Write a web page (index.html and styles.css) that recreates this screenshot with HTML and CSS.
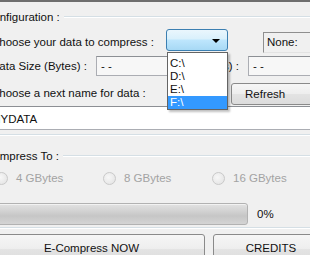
FILE: index.html
```html
<!DOCTYPE html>
<html lang="en">
<head>
  <meta charset="UTF-8">
  <title>E-Compress</title>
  <link rel="stylesheet" href="styles.css">
</head>
<body>
  <div class="window">
    <!-- Configuration group -->
    <div class="group-title">
      <span>Configuration :</span>
      <span class="group-line"></span>
    </div>

    <div class="row row-drive">
      <span class="label label-drive">Choose your data to compress :</span>
      <div class="combo">
        <div class="combo-box"><span class="combo-arrow"></span></div>
        <div class="combo-list">
          <div class="combo-item">C:\</div>
          <div class="combo-item">D:\</div>
          <div class="combo-item">E:\</div>
          <div class="combo-item selected">F:\</div>
        </div>
      </div>
      <div class="none-box">None:</div>
    </div>

    <div class="row row-size">
      <span class="label label-size">Data Size (Bytes) :</span>
      <div class="textbox readonly size-box">- -</div>
      <span class="label label-free">(Bytes) :</span>
      <div class="textbox readonly free-box">- -</div>
    </div>

    <div class="row row-name">
      <span class="label label-name">Choose a next name for data :</span>
      <div class="btn refresh">Refresh</div>
    </div>

    <div class="textbox name-box">MYDATA</div>
    <div class="group-bottom"></div>

    <!-- Compress To group -->
    <div class="group-title title-compress">
      <span>Compress To :</span>
      <span class="group-line"></span>
    </div>

    <div class="radios">
      <div class="radio"><span class="radio-dot"></span>4 GBytes</div>
      <div class="radio"><span class="radio-dot"></span>8 GBytes</div>
      <div class="radio"><span class="radio-dot"></span>16 GBytes</div>
    </div>

    <div class="row row-progress">
      <div class="progress"></div>
      <span class="percent">0%</span>
    </div>
    <div class="group-bottom bottom-compress"></div>

    <div class="row row-actions">
      <div class="btn compress-now">E-Compress NOW</div>
      <div class="btn credits">CREDITS</div>
    </div>
  </div>
</body>
</html>
```

FILE: styles.css
```css
body {
  margin: 0;
  background-color: #f0f0f0;
  overflow: hidden;
  font-family: "Liberation Sans", Arial, sans-serif;
  font-size: 11.5px;
  color: #111;
}

.window {
  margin-left: -15px;
  width: 360px;
  border-top: 2px solid #6e6e6e;
}

/* group boxes */
.group-title {
  display: flex;
  align-items: center;
  height: 14px;
  line-height: 14px;
  margin-top: 8px;
  white-space: nowrap;
}

.group-line {
  flex: 1;
  margin-left: 4px;
  border-top: 1px solid #d5dfe5;
  border-bottom: 1px solid #fff;
}

.group-bottom {
  margin-top: 4px;
  border-top: 1px solid #d5dfe5;
  border-bottom: 1px solid #fff;
}

.title-compress {
  margin-top: 13px;
}

.bottom-compress {
  margin-top: 2px;
}

/* rows */
.row {
  display: flex;
  align-items: flex-start;
  white-space: nowrap;
}

.label {
  flex-shrink: 0;
}

.row-drive {
  margin-top: 5px;
  padding-left: 6px;
}

.label-drive {
  width: 175px;
  margin-top: 2px;
  line-height: 22px;
}

.combo {
  position: relative;
  width: 62px;
  flex-shrink: 0;
}

.combo-box {
  height: 20px;
  border: 1px solid #3c7fb1;
  border-radius: 3px;
  background: linear-gradient(#eaf6fd, #d9f0fc 45%, #bee6fd 50%, #a7d9f5);
  position: relative;
}

.combo-arrow {
  position: absolute;
  right: 7px;
  top: 9px;
  border-left: 4px solid transparent;
  border-right: 4px solid transparent;
  border-top: 4px solid #000;
}

.combo-list {
  position: absolute;
  z-index: 2;
  top: 23px;
  left: 1px;
  width: 59px;
  padding-top: 4px;
  background-color: #fff;
  border: 1px solid #646464;
  box-shadow: 2px 2px 2px rgba(0,0,0,0.25);
}

.combo-item {
  height: 13px;
  line-height: 13px;
  padding-left: 2px;
}

.combo-item.selected {
  background-color: #3399ff;
  color: #fff;
}

.none-box {
  margin-left: 35px;
  margin-top: 3px;
  width: 80px;
  height: 19px;
  line-height: 19px;
  padding-left: 3px;
  border: 1px solid #8f8f8f;
  border-right-color: #e3e3e3;
  border-bottom-color: #e3e3e3;
}

.textbox {
  height: 18px;
  line-height: 18px;
  padding-left: 4px;
  border: 1px solid #abadb3;
  border-top-color: #8c8f94;
  background-color: #fff;
  flex-shrink: 0;
}

.readonly {
  background-color: #f7f7f7;
}

.row-size {
  margin-top: 3px;
  padding-left: 6px;
}

.row-size .label {
  line-height: 20px;
}

.label-size {
  width: 105px;
}

.size-box {
  width: 90px;
}

.label-free {
  width: 47px;
  text-align: right;
}

.free-box {
  margin-left: 9px;
  width: 80px;
}

.row-name {
  margin-top: 7px;
  padding-left: 6px;
}

.label-name {
  width: 240px;
  line-height: 20px;
}

/* buttons */
.btn {
  flex-shrink: 0;
  box-sizing: border-box;
  border: 1px solid #8a8a8a;
  border-radius: 3px;
  background: linear-gradient(#f6f6f6, #eeeeee 48%, #e3e3e3 52%, #dcdcdc);
  text-align: center;
}

.refresh {
  width: 100px;
  height: 22px;
  line-height: 20px;
  text-align: left;
  padding-left: 13px;
}

.name-box {
  margin-top: 1px;
  margin-left: 2px;
  width: 340px;
  height: 22px;
  line-height: 24px;
  padding-left: 3px;
}

/* radios */
.radios {
  display: grid;
  grid-template-columns: 108px 109px 109px;
  margin-top: 8px;
  padding-left: 10px;
  height: 14px;
  line-height: 14px;
  color: #a3a3a3;
}

.radio {
  display: flex;
  align-items: center;
}

.radio-dot {
  width: 11px;
  height: 11px;
  margin-right: 8px;
  border: 1px solid #c9c9c9;
  border-radius: 50%;
  background: radial-gradient(circle at 40% 40%, #f7f7f7, #e1e1e1);
}

/* progress */
.row-progress {
  margin-top: 18px;
  align-items: center;
}

.progress {
  width: 261px;
  height: 20px;
  border: 1px solid #b2b2b2;
  border-radius: 3px;
  background: linear-gradient(#e2e2e2, #d0d0d0 40%, #c6c6c6 60%, #d4d4d4);
  box-shadow: inset 0 1px 0 #f2f2f2;
}

.percent {
  margin-left: 9px;
  line-height: 22px;
}

/* bottom actions */
.row-actions {
  margin-top: 5px;
  margin-left: -7px;
  gap: 8px;
}

.compress-now,
.credits {
  height: 30px;
  line-height: 26px;
}

.compress-now {
  width: 227px;
}

.credits {
  width: 116px;
}
```
